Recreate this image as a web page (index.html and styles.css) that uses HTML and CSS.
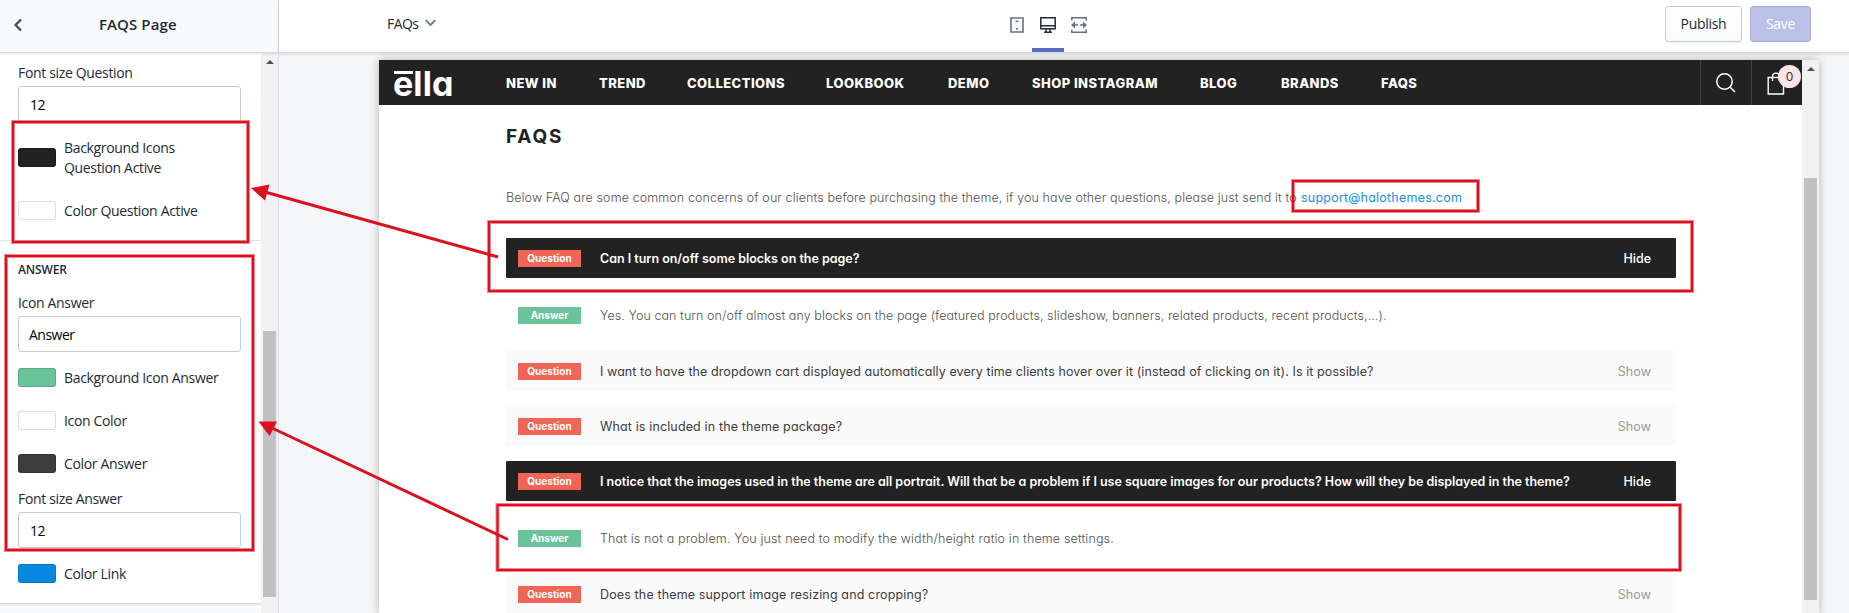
FILE: index.html
```html
<!DOCTYPE html>
<html lang="en">
<head>
<meta charset="utf-8">
<title>FAQS Page</title>
<link rel="stylesheet" href="styles.css">
</head>
<body>
<div class="editor">
  <aside class="panel">
    <header class="panel-head">
      <svg class="back" width="8" height="14" viewBox="0 0 8 14"><path d="M7 1.5 1.5 7 7 12.5" fill="none" stroke="#42474c" stroke-width="2.2"/></svg>
      <h1 class="panel-title">FAQS Page</h1>
    </header>
    <div class="panel-body">
      <div class="settings">
        <section class="group group-question">
          <label class="label">Font size Question</label>
          <div class="input">12</div>
          <div class="swatch-row row-tall"><i class="swatch sw-black"></i><span>Background Icons<br>Question Active</span></div>
          <div class="swatch-row row-cq"><i class="swatch sw-white"></i><span>Color Question Active</span></div>
        </section>
        <section class="group group-answer">
          <h2 class="group-title">ANSWER</h2>
          <label class="label">Icon Answer</label>
          <div class="input input-word">Answer</div>
          <div class="swatch-row first"><i class="swatch sw-green"></i><span>Background Icon Answer</span></div>
          <div class="swatch-row"><i class="swatch sw-white"></i><span>Icon Color</span></div>
          <div class="swatch-row"><i class="swatch sw-gray"></i><span>Color Answer</span></div>
          <label class="label label-fsa">Font size Answer</label>
          <div class="input">12</div>
          <div class="swatch-row link"><i class="swatch sw-blue"></i><span>Color Link</span></div>
        </section>
      </div>
      <div class="scroll scroll-left"><i class="up"></i><i class="thumb"></i></div>
    </div>
  </aside>
  <div class="main">
    <header class="topbar">
      <div class="page-picker"><span class="page-name">FAQs</span>
        <svg width="11" height="8" viewBox="0 0 11 8"><path d="M.7 1.200 5.500 6 10.300 1.200" fill="none" stroke="#637381" stroke-width="1.700"/></svg>
      </div>
      <nav class="devices">
        <span class="device"><svg width="14" height="16" viewBox="0 0 14 16"><path d="M1 1h12v14H1z" fill="none" stroke="#637381" stroke-width="1.600"/><path d="M5.500 3.500h3v1.600h-3zM6 11h2v1.600H6z" fill="#637381"/></svg></span>
        <span class="device active"><svg width="16" height="16" viewBox="0 0 16 16"><path d="M.8.8h14.400v10.900H.8zM.8 8.800h14.400M6 12v3M10 12v3M4.200 15.200h7.600" fill="none" stroke="#212b36" stroke-width="1.500"/></svg></span>
        <span class="device"><svg width="16" height="16" viewBox="0 0 16 16"><path d="M.8 3.500V.8h14.400v2.700M.8 12.500v2.700h14.400v-2.700M2 8h5M9 8h5" fill="none" stroke="#637381" stroke-width="1.500"/><path d="M0 8l4-3.400v6.800zM16 8l-4-3.400v6.800z" fill="#637381"/></svg></span>
      </nav>
      <div class="actions"><button class="btn">Publish</button><button class="btn btn-save">Save</button></div>
    </header>
    <div class="stage">
      <div class="preview">
        <div class="store">
          <header class="store-bar">
            <div class="logo"><span class="logo-text">ella</span><i class="macron"></i></div>
            <nav class="menu">
              <a class="n1">NEW IN</a><a class="n2">TREND</a><a class="n3">COLLECTIONS</a><a class="n4">LOOKBOOK</a><a class="n5">DEMO</a><a class="n6">SHOP INSTAGRAM</a><a class="n7">BLOG</a><a class="n8">BRANDS</a><a class="n9">FAQS</a>
            </nav>
            <div class="tool"><svg width="20" height="20" viewBox="0 0 20 20"><circle cx="8.500" cy="8.500" r="7.700" fill="none" stroke="#fff" stroke-width="1.500"/><path d="M14 14l5 5" stroke="#fff" stroke-width="1.500"/></svg></div>
            <div class="tool cart"><svg width="18" height="23" viewBox="0 0 18 23"><path d="M1.200 5.500h15.300V22H1.200zM5.500 9V4.500a3.400 3.400 0 0 1 6.800 0V9" fill="none" stroke="#fff" stroke-width="1.400"/></svg><span class="count">0</span></div>
          </header>
          <main class="content">
            <h2 class="heading">FAQS</h2>
            <p class="intro"><span class="i1">Below FAQ are some common concerns of our clients before purchasing the theme, if you have other questions, please just send it to</span><a class="i2">support@halothemes.com</a></p>
            <div class="q open"><b class="tag">Question</b><span>Can I turn on/off some blocks on the page?</span><em>Hide</em></div>
            <div class="a"><b class="tag ans">Answer</b><span>Yes. You can turn on/off almost any blocks on the page (featured products, slideshow, banners, related products, recent products,...).</span></div>
            <div class="q"><b class="tag">Question</b><span>I want to have the dropdown cart displayed automatically every time clients hover over it (instead of clicking on it). Is it possible?</span><em>Show</em></div>
            <div class="q"><b class="tag">Question</b><span class="q3">What is included in the theme package?</span><em>Show</em></div>
            <div class="q open"><b class="tag">Question</b><span class="q4">I notice that the images used in the theme are all portrait. Will that be a problem if I use square images for our products? How will they be displayed in the theme?</span><em>Hide</em></div>
            <div class="a"><b class="tag ans">Answer</b><span class="a2">That is not a problem. You just need to modify the width/height ratio in theme settings.</span></div>
            <div class="q"><b class="tag">Question</b><span class="q3">Does the theme support image resizing and cropping?</span><em>Show</em></div>
          </main>
        </div>
        <div class="scroll scroll-right"><i class="up"></i><i class="thumb"></i></div>
      </div>
    </div>
  </div>
</div>
<svg class="marks" width="1849" height="613" viewBox="0 0 1849 613">
  <g fill="none" stroke="#dc1020">
    <g stroke-width="4" stroke-opacity=".5">
      <path d="M13 122h235v120h-235zM6 256h247v294h-247zM1293 181h185v30h-185zM489 222h1203v69h-1203zM497.500 505h1182.500v65h-1182.500z"/>
    </g>
    <g stroke-width="2">
      <path d="M13 122h235v120h-235zM6 256h247v294h-247zM1293 181h185v30h-185zM489 222h1203v69h-1203zM497.500 505h1182.500v65h-1182.500z"/>
    </g>
    <path stroke-width="3" d="M498 257 265 192M508 539.500 272 428"/>
  </g>
  <path fill="#dc1020" d="M251 188l18.500-3.500-4.500 16zM258.500 421.500h18.500l-7.500 14.500z"/>
</svg>
</body>
</html>
```
FILE: styles.css
```css
* { box-sizing: border-box; }
body { margin: 0; width: 1849px; height: 613px; overflow: hidden; font-family: "Open Sans", "Noto Sans", sans-serif; font-size: 14px; color: #212b36; }
h1, h2, p { margin: 0; font-weight: 400; }
.editor { display: flex; height: 613px; }

/* settings panel */
.panel { width: 279px; display: flex; flex-direction: column; border-right: 1px solid #dfe3e8; background: #fff; flex: none; letter-spacing: -.34px; }
.panel-head { height: 53px; background: #f9fafb; border-bottom: 1px solid #d8dbde; display: flex; align-items: center; padding: 0 0 4px 14px; box-shadow: 0 1px 2px rgba(0,0,0,.1); z-index: 1; flex: none; }
.back { position: relative; top: 1px; }
.panel-title { font-size: 15px; font-weight: 600; margin-left: 77px; line-height: 20px; letter-spacing: .1px; padding-bottom: 1px; }
.panel-body { display: flex; flex: 1; min-height: 0; }
.settings { width: 261px; background: #f9fafb; overflow: hidden; }
.group { background: #fff; padding: 0 20px 0 18px; }
.group-question { height: 188px; padding-top: 10px; border-bottom: 1px solid #e3e5e8; }
.group-answer { height: 363px; padding-top: 19px; border-bottom: 1px solid #d8dbde; box-shadow: 0 1px 2px rgba(0,0,0,.1); }
.label { display: block; line-height: 20px; height: 20px; }
.input { height: 36px; margin-top: 3px; border: 1px solid #c4cdd5; border-radius: 3px; padding-left: 11px; line-height: 35px; color: #000; width: 223px; letter-spacing: -.5px; }
.input-word { padding-left: 10px; }
.swatch-row { display: flex; align-items: center; gap: 8px; height: 19px; margin-top: 24px; line-height: 20px; }
.swatch { width: 38px; height: 19px; border-radius: 3px; border: 1px solid rgba(0,0,0,.13); flex: none; }
.row-tall { height: 40px; margin-top: 16px; }
.row-tall .swatch { margin-top: -1px; }
.row-cq { margin-top: 23px; }
.sw-black { background: #222; }
.sw-white { background: #fff; }
.sw-green { background: #69c49a; }
.sw-gray { background: #3c3c3c; }
.sw-blue { background: #0688e2; }
.group-title { font-size: 12px; font-weight: 600; line-height: 20px; margin-bottom: 13px; letter-spacing: -.15px; }
.first { margin-top: 16px; }
.label-fsa { margin-top: 16px; }
.link { margin-top: 16px; }
.scroll { width: 17px; background: #f1f1f1; display: flex; flex-direction: column; align-items: center; }
.up { width: 0; height: 0; border: 4px solid transparent; border-top: 0; border-bottom-color: #505050; margin-top: 7px; }
.thumb { width: 13px; background: #c1c1c1; }
.scroll-left .thumb { height: 266px; margin-top: 267px; }

/* top bar */
.main { flex: 1; display: flex; flex-direction: column; min-width: 0; }
.topbar { height: 53px; background: #fff; border-bottom: 1px solid #d5d8db; box-shadow: 0 1px 3px rgba(0,0,0,.12); display: flex; z-index: 2; flex: none; }
.page-picker { width: 722px; padding-left: 108px; display: flex; align-items: center; gap: 7px; padding-bottom: 6px; flex: none; }
.page-name { letter-spacing: -.6px; }
.devices { display: flex; }
.device { width: 32px; height: 52px; display: flex; align-items: center; justify-content: center; padding-bottom: 2px; margin-right: -1px; }
.device.active { border-bottom: 4px solid #5c6ac4; padding-top: 2px; padding-bottom: 0; }
.actions { margin-left: auto; padding: 6px 38px 0 0; display: flex; gap: 8px; align-items: flex-start; }
.btn { width: 77px; height: 36px; border: 1px solid #c4cdd5; border-radius: 3px; background: linear-gradient(#fff, #f9fafb); font: 14px/20px "Open Sans", sans-serif; letter-spacing: -.3px; color: #212b36; padding: 0; box-shadow: 0 1px 0 rgba(22,29,37,.05); }
.btn-save { width: 61px; background: #bac0e6; border-color: #a9b1e2; color: #fff; box-shadow: none; }

/* store preview */
.stage { flex: 1; background: #f4f6f8; padding: 7px 0 0 100px; min-height: 0; }
.preview { width: 1440px; height: 553px; display: flex; background: #fff; box-shadow: 0 0 9px rgba(0,0,0,.28); overflow: hidden; }
.store { width: 1423px; overflow: hidden; font-family: Inter, "Open Sans", sans-serif; font-feature-settings: "cv11"; }
.scroll-right .thumb { height: 422px; margin-top: 107px; }
.store-bar { height: 45px; background: #222; color: #fff; display: flex; align-items: center; }
.logo { width: 127px; padding-left: 14px; height: 45px; position: relative; }
.logo-text { font-weight: 700; font-size: 34px; line-height: 40px; display: block; padding-top: 4px; letter-spacing: .1px; }
.macron { position: absolute; left: 15px; top: 11px; width: 19px; height: 3px; background: #fff; }
.menu { display: flex; flex: 1; font-weight: 800; font-size: 13px; line-height: 18px; padding-top: 0; white-space: nowrap; letter-spacing: .45px; }
.menu a { flex: none; }
.n1 { width: 93px; } .n2 { width: 88px; } .n3 { width: 139px; } .n4 { width: 122px; } .n5 { width: 84px; } .n6 { width: 168px; } .n7 { width: 81px; } .n8 { width: 100px; }
.tool { width: 51px; height: 45px; border-left: 1px solid #434343; display: flex; align-items: center; justify-content: center; flex: none; }
.cart { position: relative; }
.cart svg { position: relative; left: -1px; top: 1px; }
.count { position: absolute; right: 1px; top: 5px; width: 23px; height: 23px; border-radius: 50%; background: #fde3e3; color: #333; font-size: 12px; line-height: 23px; text-align: center; }
.content { padding-left: 127px; width: 1298px; font-size: 12.5px; }
.heading { font-size: 19px; font-weight: 700; color: #222; line-height: 26px; padding-top: 19px; letter-spacing: 1.8px; }
.intro { display: flex; line-height: 20px; margin-top: 38px; font-weight: 300; white-space: nowrap; color: #505050; letter-spacing: .11px; }
.i1 { width: 795px; }
.i2 { color: #1a8fe6; font-weight: 400; letter-spacing: .22px; }
.q { height: 40px; margin-top: 15px; background: #fafafa; display: flex; align-items: center; border-radius: 1px; padding: 0 25px 0 12px; width: 1170px; white-space: nowrap; color: #3c3c3c; letter-spacing: .085px; }
.intro + .q { margin-top: 30px; }
.q.open { background: #222; color: #fff; font-weight: 600; letter-spacing: -.02px; }
.q3 { letter-spacing: .14px; }
.tag { width: 63px; height: 17px; background: #f16557; color: #fff; font-size: 10px; line-height: 17px; font-weight: 700; text-align: center; margin-right: 19px; flex: none; letter-spacing: 0; }
.ans { background: #69c49a; }
.q em { font-style: normal; margin-left: auto; color: #999; font-weight: 400; }
.q.open em { color: #fff; font-weight: 500; }
.a { height: 58px; padding: 17px 0 0 12px; display: flex; align-items: center; white-space: nowrap; font-weight: 300; color: #505050; letter-spacing: .075px; }
.a2 { letter-spacing: .145px; }

/* callouts over the whole editor */
.marks { position: absolute; left: 0; top: 0; }
```
